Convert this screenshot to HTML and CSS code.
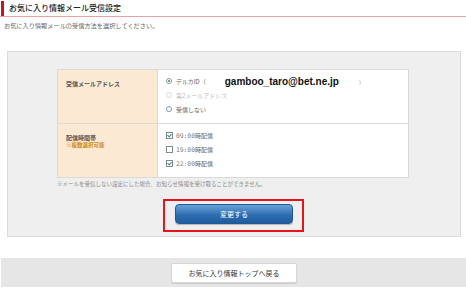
FILE: index.html
```html
<!DOCTYPE html>
<html lang="ja">
<head>
<meta charset="utf-8">
<link rel="stylesheet" href="styles.css">
</head>
<body>
<div class="page">
  <h1 class="title">お気に入り情報メール受信設定</h1>
  <p class="lead">お気に入り情報メールの受信方法を選択してください。</p>

  <div class="panel">
    <table class="form">
      <tr class="row">
        <th class="label">受信メールアドレス</th>
        <td class="field">
          <div class="opt"><span class="radio on"></span>デルカID（<span class="email">gamboo_taro@bet.ne.jp</span><span class="paren">）</span></div>
          <div class="opt disabled"><span class="radio off"></span>第2メールアドレス</div>
          <div class="opt"><span class="radio"></span>受信しない</div>
        </td>
      </tr>
      <tr class="row">
        <th class="label">配信時間帯<span class="sub">※複数選択可能</span></th>
        <td class="field">
          <div class="opt"><span class="check on"></span><span class="time">09:00</span>時配信</div>
          <div class="opt"><span class="check"></span><span class="time">19:00</span>時配信</div>
          <div class="opt"><span class="check on"></span><span class="time">22:00</span>時配信</div>
        </td>
      </tr>
    </table>
    <p class="note">※メールを受信しない設定にした場合、お知らせ情報を受け取ることができません。</p>
    <div class="submit-wrap">
      <button class="submit" type="button">変更する</button>
    </div>
  </div>

  <div class="bottom">
    <button class="back" type="button">お気に入り情報トップへ戻る</button>
  </div>
</div>
</body>
</html>
```
FILE: styles.css
```css
* { box-sizing: border-box; }
html, body { margin: 0; padding: 0; background: #fff; }
body {
  font-family: "Noto Sans CJK JP", "Noto Sans", sans-serif;
  color: #333;
  width: 466px;
  overflow: hidden;
}
.page { padding-top: 1px; }
.title {
  margin: 0 0 0 1px;
  height: 15px;
  padding-left: 5px;
  border-left: 3px solid #c4161c;
  font-size: 8px;
  line-height: 14px;
  font-weight: 500;
  color: #222;
  position: relative;
}
.title::after {
  content: "";
  position: absolute;
  left: -4px;
  right: 0;
  bottom: -1px;
  height: 1px;
  background: #e7a3a3;
}
.lead {
  margin: 5px 0 0 4px;
  font-size: 6.2px;
  line-height: 10px;
  color: #666;
}
.panel {
  margin: 20px 5px 0 7px;
  height: 186px;
  background: #efefef;
  border: 1px solid #dcdcdc;
  padding: 17px 50px 0 49px;
}
.form {
  width: 352px;
  border-collapse: collapse;
  background: #fff;
}
.form th, .form td {
  border: 1px solid #dadada;
  vertical-align: top;
}
.row { height: 53px; }
.label {
  width: 100px;
  background: #fbe9d4;
  text-align: left;
  padding: 9px 8px 0;
  font-size: 6px;
  line-height: 9px;
  font-weight: 700;
  color: #555;
}
.sub {
  display: block;
  color: #d08a1a;
  font-size: 5.5px;
  line-height: 7px;
}
.field {
  padding: 4px 8px 7px;
}
.opt {
  display: flex;
  align-items: center;
  height: 14px;
  font-size: 6px;
  color: #666;
}
.opt.disabled { color: #bbb; }
.radio {
  width: 6px;
  height: 6px;
  border: 1px solid #8a9aa6;
  border-radius: 50%;
  margin-right: 4px;
  display: flex;
  align-items: center;
  justify-content: center;
  background: #fff;
}
.radio.on::after {
  content: "";
  width: 2px;
  height: 2px;
  border-radius: 50%;
  background: #3a8a6a;
}
.radio.off { border-color: #ddd; }
.email {
  margin-left: 19px;
  font-family: "Liberation Sans", sans-serif;
  font-weight: 700;
  font-size: 10px;
  color: #111;
}
.paren { margin-left: 20px; color: #888; font-size: 5px; }
.check {
  width: 7px;
  height: 7px;
  border: 1px solid #7d8a93;
  margin-right: 3px;
  background: #fff;
  position: relative;
}
.check.on::after {
  content: "";
  position: absolute;
  left: 1px;
  top: 0;
  width: 2px;
  height: 3px;
  border-right: 1px solid #3a8a6a;
  border-bottom: 1px solid #3a8a6a;
  transform: rotate(40deg);
}
.time {
  font-family: "DejaVu Sans Mono", monospace;
  font-size: 6.3px;
  color: #777;
}
.note {
  margin: 2px 0 0;
  font-size: 5.5px;
  line-height: 9px;
  color: #888;
}
.submit-wrap {
  width: 141px;
  height: 33px;
  margin: 10px auto 0;
  border: 2px solid #e8141b;
  padding: 3px 9px 6px 10px;
}
.submit {
  display: block;
  width: 100%;
  height: 20px;
  border: 1px solid #1f5a95;
  border-radius: 4px;
  background: linear-gradient(#6aa3d8, #2e6db1 55%, #1e5c9e);
  color: #fff;
  font-family: "Noto Sans CJK JP", sans-serif;
  font-size: 7px;
  padding: 0;
  box-shadow: 0 1px 1px rgba(0,0,0,0.25);
}
.bottom {
  margin: 21px 0 0 1px;
  height: 29px;
  background: #e6e6e6;
  display: flex;
  justify-content: center;
  align-items: center;
  padding-right: 1px;
}
.back {
  width: 126px;
  height: 20px;
  margin-left: 2px;
  background: #fff;
  border: 1px solid #d6d6d6;
  border-radius: 2px;
  box-shadow: 0 1px 1px rgba(0,0,0,0.12);
  font-family: "Noto Sans CJK JP", sans-serif;
  font-size: 7px;
  color: #333;
  padding: 0;
}
```
